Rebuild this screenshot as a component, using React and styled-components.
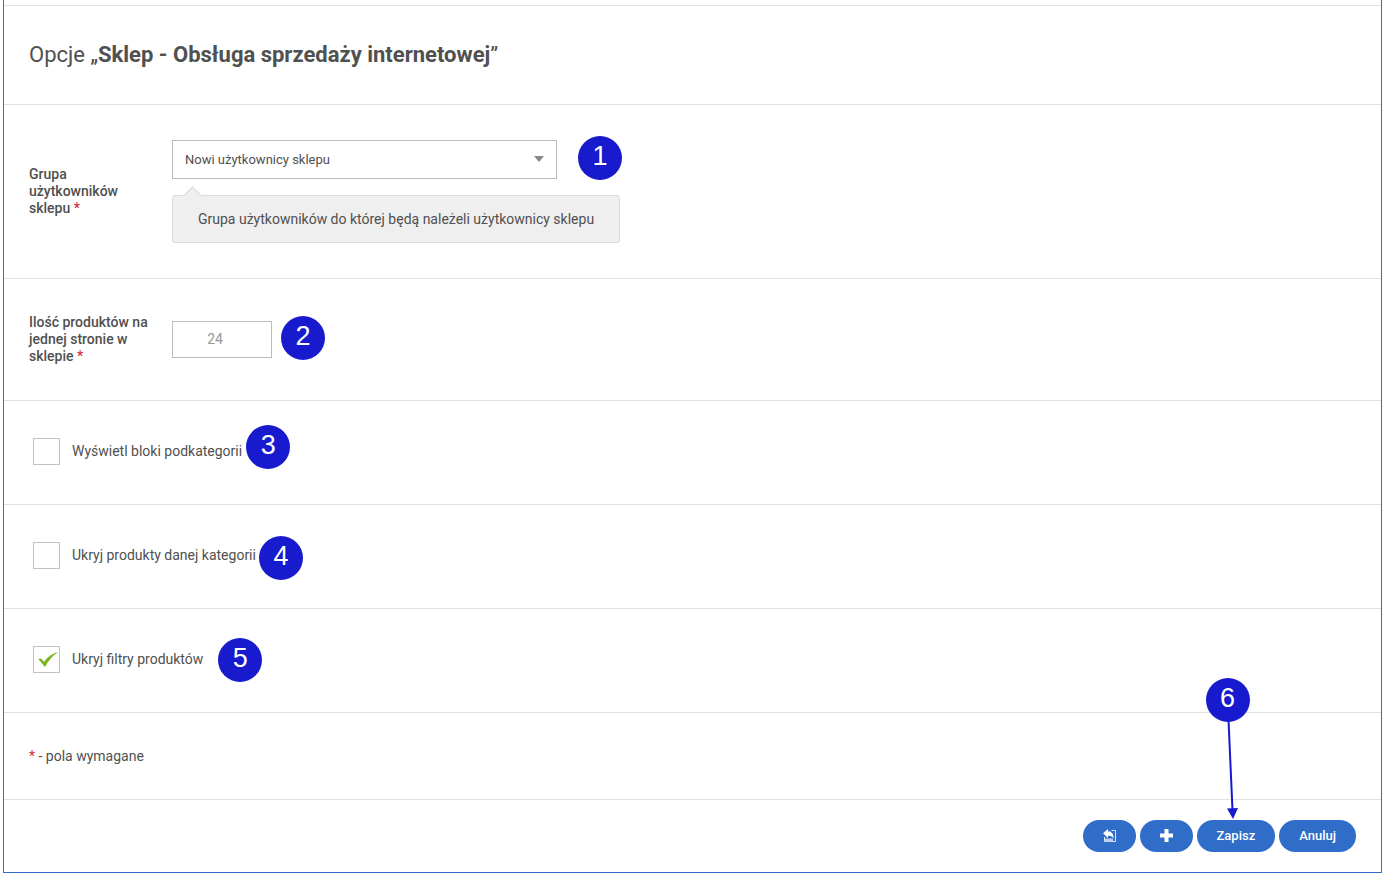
import React from 'react';
import styled, { createGlobalStyle } from 'styled-components';

const GlobalStyle = createGlobalStyle`
  * {
    box-sizing: border-box;
  }

  body {
    margin: 0;
    background: #fff;
    color: #505050;
    font-family: Roboto, 'Liberation Sans', sans-serif;
    font-size: 14px;
    line-height: 17px;
  }
`;

// Blue frame around the whole options form
const Panel = styled.form`
  margin: 0 3px 3px;
  padding-top: 5px;
  border: 1px solid #2f6dc9;
  border-top: none;
`;

const Header = styled.header`
  padding: 35px 25px;
  border-top: 1px solid #e2e2e2;
`;

const Title = styled.h1`
  margin: 0;
  font-size: 22px;
  font-weight: 400;
  line-height: 28px;

  strong {
    font-weight: 700;
  }
`;

const Row = styled.div`
  display: flex;
  align-items: center;
  gap: 20px;
  padding: 35px 25px;
  border-top: 1px solid #e2e2e2;
`;

const FieldLabel = styled.label`
  flex: none;
  width: 123px;
  font-weight: 500;
`;

const Required = styled.span`
  color: #d0313d;
`;

const Field = styled.div`
  display: flex;
  flex-direction: column;
  align-items: flex-start;
  gap: 16px;
`;

// Box that a numbered marker is pinned to
const Anchor = styled.div`
  position: relative;
`;

const SelectBox = styled(Anchor)`
  width: 385px;

  &::after {
    content: '';
    position: absolute;
    top: 16px;
    right: 13px;
    border: 5px solid transparent;
    border-top: 6px solid #888;
    border-bottom: none;
    pointer-events: none;
  }
`;

const Select = styled.select`
  display: block;
  width: 100%;
  height: 39px;
  padding: 0 32px 0 12px;
  border: 1px solid #bbb;
  border-radius: 0;
  background: #fff;
  color: #505050;
  font: 400 13px Roboto, 'Liberation Sans', sans-serif;
  appearance: none;
`;

const Hint = styled.div`
  position: relative;
  padding: 15px 25px;
  border: 1px solid #dcdcdc;
  border-radius: 3px;
  background: #efefef;
  line-height: 16px;

  &::before {
    content: '';
    position: absolute;
    top: -7px;
    left: 13px;
    width: 12px;
    height: 12px;
    border: 1px solid #dcdcdc;
    border-right: none;
    border-bottom: none;
    background: #efefef;
    transform: rotate(45deg);
  }
`;

const NumberInput = styled.input`
  display: block;
  width: 100px;
  height: 37px;
  padding: 0 14px 2px 0;
  border: 1px solid #bbb;
  border-radius: 0;
  background: #fff;
  color: #999;
  font: 400 14px Roboto, 'Liberation Sans', sans-serif;
  text-align: center;
`;

const CheckRow = styled.div`
  display: flex;
  padding: 37px 29px 39px;
  border-top: 1px solid #e2e2e2;
`;

const CheckLabel = styled.label`
  position: relative;
  display: flex;
  align-items: center;
  gap: 12px;
`;

const CheckBox = styled.span`
  position: relative;
  width: 27px;
  height: 27px;

  input {
    display: block;
    width: 100%;
    height: 100%;
    margin: 0;
    border: 1px solid #c3c3c3;
    background: #fff;
    appearance: none;
  }

  svg {
    position: absolute;
    inset: 0;
    display: none;
    pointer-events: none;
  }

  input:checked + svg {
    display: block;
  }
`;

const Note = styled.p`
  margin: 0;
  padding: 35px 25px;
  border-top: 1px solid #e2e2e2;
  line-height: 16px;
`;

const Footer = styled.footer`
  display: flex;
  justify-content: flex-end;
  gap: 4px;
  padding: 20px 25px;
  border-top: 1px solid #e2e2e2;
`;

const Button = styled.button`
  display: flex;
  align-items: center;
  height: 32px;
  padding: 0 20px 2px;
  border: none;
  border-radius: 16px;
  background: #2f6dc9;
  color: #fff;
  font: 500 13px Roboto, 'Liberation Sans', sans-serif;
  cursor: pointer;
`;

// Numbered circle laid over the form, pinned to its anchor
const Marker = styled.span`
  position: absolute;
  top: ${(props) => props.$top}px;
  left: ${(props) => (props.$gap === undefined ? '9px' : `calc(100% + ${props.$gap}px)`)};
  width: 44px;
  height: 44px;
  border-radius: 50%;
  background: #171bcd;
  color: #fff;
  font-family: 'Liberation Sans', sans-serif;
  font-size: 27px;
  line-height: 40px;
  text-align: center;
  pointer-events: none;
`;

const Arrow = styled.svg`
  position: absolute;
  bottom: 100%;
  left: 24px;
  pointer-events: none;
`;

const CheckIcon = () => (
  <svg width="27" height="27" viewBox="0 0 27 27" aria-hidden="true">
    <path
      d="M5.500 13.500C6.500 12.200 8 12.500 8.800 13.300L11.200 15.700C14 11.500 18.500 7.500 25 6.200 19.500 9.500 15.500 14.500 12.300 20.500H11.300C9.800 18.300 8 15.500 5.500 13.500Z"
      fill="#7ab51d"
    />
  </svg>
);

const BackIcon = () => (
  <svg width="13" height="13" viewBox="0 0 13 13" aria-hidden="true">
    <path d="M8.500 1.500H12.500V12.500H1.500V8" fill="none" stroke="#dbe6f7" strokeWidth="1" />
    <path d="M2 9.500H10V12.500H2Z" fill="#b9cdee" />
    <path d="M0 4.200 5 0V2.200C8.800 2.300 10.800 5 10.500 9.500 9 7.200 7.500 6.800 5 6.800V9Z" fill="#fff" />
  </svg>
);

const PlusIcon = () => (
  <svg width="13" height="13" viewBox="0 0 13 13" aria-hidden="true">
    <path d="M4.500 0H8.500V4.500H13V8.500H8.500V13H4.500V8.500H0V4.500H4.500Z" fill="#fff" />
  </svg>
);

const options = [
  { id: 'subcategories', label: 'Wyświetl bloki podkategorii', marker: 3, top: -13, gap: 4 },
  { id: 'products', label: 'Ukryj produkty danej kategorii', marker: 4, top: -6, gap: 3 },
  { id: 'filters', label: 'Ukryj filtry produktów', marker: 5, top: -8, gap: 15, checked: true },
];

const App = () => {
  return (
    <>
      <GlobalStyle />
      <Panel onSubmit={(e) => e.preventDefault()}>
        <Header>
          <Title>
            Opcje „<strong>Sklep - Obsługa sprzedaży internetowej</strong>”
          </Title>
        </Header>

        <Row>
          <FieldLabel htmlFor="group">
            Grupa użytkowników sklepu <Required>*</Required>
          </FieldLabel>
          <Field>
            <SelectBox>
              <Select id="group" aria-describedby="group-hint">
                <option>Nowi użytkownicy sklepu</option>
              </Select>
              <Marker $top={-4} $gap={21}>1</Marker>
            </SelectBox>
            <Hint id="group-hint">
              Grupa użytkowników do której będą należeli użytkownicy sklepu
            </Hint>
          </Field>
        </Row>

        <Row>
          <FieldLabel htmlFor="per-page">
            Ilość produktów na jednej stronie w sklepie <Required>*</Required>
          </FieldLabel>
          <Anchor>
            <NumberInput id="per-page" type="text" inputMode="numeric" defaultValue="24" />
            <Marker $top={-5} $gap={9}>2</Marker>
          </Anchor>
        </Row>

        {options.map((option) => (
          <CheckRow key={option.id}>
            <CheckLabel>
              <CheckBox>
                <input type="checkbox" defaultChecked={option.checked} />
                <CheckIcon />
              </CheckBox>
              {option.label}
              <Marker $top={option.top} $gap={option.gap}>{option.marker}</Marker>
            </CheckLabel>
          </CheckRow>
        ))}

        <Note>
          <Required>*</Required> - pola wymagane
        </Note>

        <Footer>
          <Button type="button" aria-label="Zapisz i wróć">
            <BackIcon />
          </Button>
          <Button type="button" aria-label="Zapisz i dodaj">
            <PlusIcon />
          </Button>
          <Anchor>
            <Button type="submit">Zapisz</Button>
            <Arrow width="20" height="100" viewBox="0 0 20 100" aria-hidden="true">
              <path d="M7.500 0 11.500 90" stroke="#171bcd" strokeWidth="2" />
              <path d="M6 88.500 17 88 12 99Z" fill="#171bcd" />
            </Arrow>
            <Marker $top={-142}>6</Marker>
          </Anchor>
          <Button type="button">Anuluj</Button>
        </Footer>
      </Panel>
    </>
  );
};

export default App;
